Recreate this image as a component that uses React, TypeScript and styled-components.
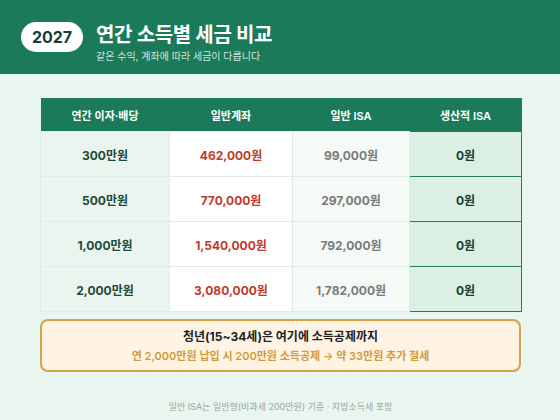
import styled, { createGlobalStyle } from 'styled-components';

const GlobalStyle = createGlobalStyle`
  html, body {
    margin: 0;
    padding: 0;
    background: #e9f5ef;
    font-family: Inter, "Noto Sans CJK KR", "Noto Sans", sans-serif;
  }
`;

const Page = styled.div`
  width: 560px;
  height: 420px;
  display: flex;
  flex-direction: column;
  background: #e9f5ef;
  overflow: hidden;
`;

const Header = styled.header`
  height: 74px;
  box-sizing: border-box;
  background: #1b7a5a;
  display: flex;
  align-items: flex-start;
  gap: 13px;
  padding: 22px 0 0 21px;
`;

const Badge = styled.div`
  width: 62px;
  height: 30px;
  border-radius: 15px;
  background: #ffffff;
  color: #153f30;
  font-size: 16px;
  font-weight: 700;
  display: flex;
  align-items: center;
  justify-content: center;
`;

const TitleBlock = styled.div`
  display: flex;
  flex-direction: column;
`;

const Title = styled.h1`
  margin: 0;
  color: #ffffff;
  font-size: 20px;
  font-weight: 700;
  letter-spacing: -0.3px;
  line-height: 26px;
`;

const Subtitle = styled.p`
  margin: 1px 0 0;
  color: #cfe6dc;
  font-size: 10px;
  line-height: 14px;
`;

const Main = styled.main`
  flex: 1;
  display: flex;
  flex-direction: column;
  padding: 24px 39px 0 40px;
`;

const Table = styled.table`
  width: 481px;
  border-collapse: collapse;
  table-layout: fixed;
`;

const Th = styled.th`
  height: 33px;
  padding: 0;
  background: #1b7a5a;
  color: #ffffff;
  font-size: 11px;
  font-weight: 600;
  text-align: center;
`;

type Kind = 'income' | 'normal' | 'isa' | 'best';

const cellBg: Record<Kind, string> = {
  income: '#eaf5f0',
  normal: '#ffffff',
  isa: '#f5faf7',
  best: '#dcefe5',
};

const cellColor: Record<Kind, string> = {
  income: '#1c4a38',
  normal: '#c0392b',
  isa: '#7a7a7a',
  best: '#163f30',
};

const Td = styled.td<{ $kind: Kind }>`
  height: 45px;
  padding: 0;
  box-sizing: border-box;
  text-align: center;
  font-size: 12px;
  font-weight: 700;
  background: ${p => cellBg[p.$kind]};
  color: ${p => cellColor[p.$kind]};
  border: ${p => (p.$kind === 'best' ? '1.5px solid #2a7a5c' : '1px solid #dfece6')};
`;

const Callout = styled.div`
  margin-top: 7px;
  height: 53px;
  box-sizing: border-box;
  border: 2px solid #d6a24a;
  border-radius: 8px;
  background: #fff4e4;
  display: flex;
  flex-direction: column;
  align-items: center;
  justify-content: center;
  gap: 2px;
`;

const CalloutTitle = styled.div`
  color: #222222;
  font-size: 12px;
  font-weight: 700;
  line-height: 18px;
`;

const CalloutText = styled.div`
  color: #d39a3c;
  font-size: 11px;
  font-weight: 600;
  line-height: 16px;
`;

const Footer = styled.div`
  margin-top: 28px;
  text-align: center;
  color: #9aa5a0;
  font-size: 9px;
`;

const rows = [
  { income: '300만원', normal: '462,000원', isa: '99,000원' },
  { income: '500만원', normal: '770,000원', isa: '297,000원' },
  { income: '1,000만원', normal: '1,540,000원', isa: '792,000원' },
  { income: '2,000만원', normal: '3,080,000원', isa: '1,782,000원' },
];

export default function App() {
  return (
    <Page>
      <GlobalStyle />
      <Header>
        <Badge>2027</Badge>
        <TitleBlock>
          <Title>연간 소득별 세금 비교</Title>
          <Subtitle>같은 수익, 계좌에 따라 세금이 다릅니다</Subtitle>
        </TitleBlock>
      </Header>
      <Main>
        <Table>
          <colgroup>
            <col style={{ width: 129 }} />
            <col style={{ width: 123 }} />
            <col style={{ width: 117 }} />
            <col style={{ width: 112 }} />
          </colgroup>
          <thead>
            <tr>
              <Th>연간 이자·배당</Th>
              <Th>일반계좌</Th>
              <Th>일반 ISA</Th>
              <Th>생산적 ISA</Th>
            </tr>
          </thead>
          <tbody>
            {rows.map(row => (
              <tr key={row.income}>
                <Td $kind="income">{row.income}</Td>
                <Td $kind="normal">{row.normal}</Td>
                <Td $kind="isa">{row.isa}</Td>
                <Td $kind="best">0원</Td>
              </tr>
            ))}
          </tbody>
        </Table>
        <Callout>
          <CalloutTitle>청년(15~34세)은 여기에 소득공제까지</CalloutTitle>
          <CalloutText>연 2,000만원 납입 시 200만원 소득공제 → 약 33만원 추가 절세</CalloutText>
        </Callout>
        <Footer>일반 ISA는 일반형(비과세 200만원) 기준 · 지방소득세 포함</Footer>
      </Main>
    </Page>
  );
}
